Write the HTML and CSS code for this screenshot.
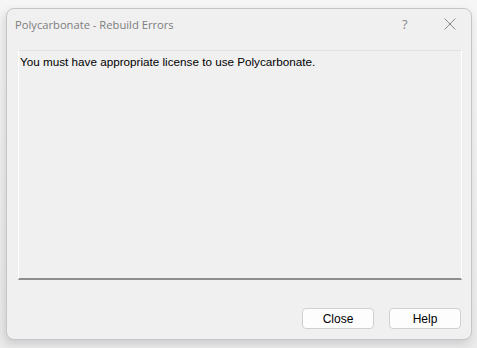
FILE: index.html
```html
<!DOCTYPE html>
<html lang="en">
<head>
    <meta charset="UTF-8">
    <title>Polycarbonate - Rebuild Errors</title>
    <link rel="stylesheet" href="styles.css">
</head>
<body>
    <div class="dialog">
        <div class="titlebar">
            <span class="title">Polycarbonate - Rebuild Errors</span>
            <span class="help-btn">?</span>
            <span class="close-btn">
                <svg width="12" height="12" viewBox="0 0 12 12">
                    <path d="M0.5 0.5 L11.5 11.5 M11.5 0.5 L0.5 11.5" stroke="#8a8a8a" stroke-width="1" fill="none"/>
                </svg>
            </span>
        </div>
        <div class="messages">You must have appropriate license to use Polycarbonate.</div>
        <div class="buttons">
            <button>Close</button>
            <button>Help</button>
        </div>
    </div>
</body>
</html>
```

FILE: styles.css
```css
html, body {
    margin: 0;
    height: 100%;
}

body {
    background: linear-gradient(#f6f6f6, #ebebeb);
    padding: 8px 5px 0 6px;
    box-sizing: border-box;
    font-family: 'Liberation Sans', Arial, sans-serif;
}

.dialog {
    width: 466px;
    height: 332px;
    box-sizing: border-box;
    background-color: #f0f0f0;
    border: 1px solid #c6c6c6;
    border-radius: 8px;
    box-shadow: -2px 4px 10px rgba(60, 60, 80, 0.18);
    display: flex;
    flex-direction: column;
}

.titlebar {
    height: 30px;
    display: flex;
    align-items: center;
    padding-left: 8px;
    font-family: 'Open Sans', 'Noto Sans', sans-serif;
    font-size: 11.2px;
    color: #7d7d7d;
}

.title {
    flex: 1;
    margin-top: 1px;
}

.help-btn {
    width: 14px;
    font-size: 13px;
    color: #8a8a8a;
    margin-right: 28px;
    margin-top: -1px;
}

.close-btn {
    display: flex;
    margin-right: 15px;
    margin-top: -1px;
}

.messages {
    margin: 11px 9px 0 11px;
    height: 230px;
    box-sizing: border-box;
    border-top: 1px solid #e2e2e2;
    border-left: 1px solid #ffffff;
    border-right: 1px solid #ffffff;
    border-bottom: 2px solid #8e8e8e;
    padding: 4px 1px;
    font-size: 11.7px;
    color: #000;
}

.buttons {
    display: flex;
    justify-content: flex-end;
    gap: 15px;
    margin-top: 28px;
    padding-right: 10px;
}

.buttons button {
    width: 72px;
    height: 21px;
    background-color: #fdfdfd;
    border: 1px solid #d0d0d0;
    border-radius: 4px;
    font-family: 'Liberation Sans', Arial, sans-serif;
    font-size: 12px;
    color: #000;
    padding: 0;
}
```
